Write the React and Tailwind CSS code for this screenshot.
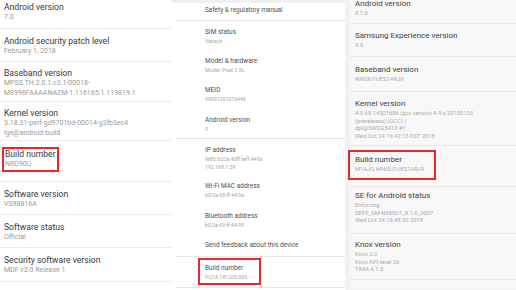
import React from "react";

// left phone (LG) - big text
const left = [
  { t: "Android version", s: ["7.0"], h: 29, pt: 1 },
  { t: "Android security patch level", s: ["February 1, 2018"], h: 33, pt: 6 },
  { t: "Baseband version", s: ["MPSS.TH.2.0.1.c3.1-00018-", "M8996FAAAANAZM-1.116165.1.119819.1"], h: 40, pt: 5 },
  { t: "Kernel version", s: ["3.18.31-perf-gd9701bd-00014-g3fb3ec4", "lge@android-build"], h: 39, pt: 5 },
  { t: "Build number", s: ["NRD90U"], h: 35, box: true },
  { t: "Software version", s: ["VS98816A"], h: 33, pt: 6 },
  { t: "Software status", s: ["Official"], h: 33, pt: 6 },
  { t: "Security software version", s: ["MDF v3.0 Release 1"], h: 34, pt: 6 },
];

// middle phone (Pixel) - grouped
const middle = [
  [{ t: "Safety & regulatory manual", s: [], h: 18, pt: 2.5 }],
  [
    { t: "SIM status", s: ["Verizon"], h: 29, pt: 6.5 },
    { t: "Model & hardware", s: ["Model: Pixel 3 XL"], h: 29, pt: 6.5 },
    { t: "MEID", s: ["99001201016446"], h: 30, pt: 6.5 },
    { t: "Android version", s: ["9"], h: 30, pt: 6.5 },
  ],
  [
    { t: "IP address", s: ["fe80::b22a:43ff:feff:449a", "192.168.1.59"], h: 33, pt: 6.5 },
    { t: "Wi-Fi MAC address", s: ["b0:2a:43:ff:44:9a"], h: 30, pt: 9.5 },
    { t: "Bluetooth address", s: ["b0:2a:43:ff:44:99"], h: 28, pt: 9.5 },
    { t: "Send feedback about this device", s: [], h: 27, pt: 10.5 },
  ],
  [{ t: "Build number", s: ["PQ1A.181205.006"], h: 30, box: true }],
];

// right phone (Samsung)
const right = [
  { t: "Android version", s: ["8.1.0"], h: 25, pt: 0, mt: -1 },
  { t: "Samsung Experience version", s: ["9.5"], h: 33, pt: 7 },
  { t: "Baseband version", s: ["N960U1UES1ARJ9"], h: 35, pt: 8 },
  { t: "Kernel version", s: ["4.9.65-14501686 (gcc version 4.9.x 20150123", "(prerelease) (GCC) )", "dpi@SWDG5413 #1", "Wed Oct 24 16:42:13 KST 2018"], h: 54, pt: 7 },
  { t: "Build number", s: ["M1AJQ.N960U1UES1ARJ9"], h: 37, box: true },
  { t: "SE for Android status", s: ["Enforcing", "SEPF_SM-N960U1_8.1.0_0007", "Wed Oct 24 16:48:30 2018"], h: 47, pt: 4 },
  { t: "Knox version", s: ["Knox 3.2", "Knox API level 26", "TIMA 4.1.0"], h: 46, pt: 6 },
  { t: "Service provider SW ver.", s: [], h: 20, pt: 8, last: true },
];

function LeftItem({ it }) {
  const title = "text-[8.6px] leading-[12px] text-[#383838]";
  const sub = "text-[7px] leading-[9.5px] text-[#9b9b9b]";
  if (it.box) {
    return (
      <div className="border-b border-[#ebebeb]" style={{ height: it.h }}>
        <div className="ml-[2px] mt-[6px] h-[25px] w-[57px] border-2 border-[#e8262b] pl-[1px]">
          <div className="text-[8.6px] leading-[11px] text-[#383838]">Build number</div>
          {it.s.map((l) => (
            <div key={l} className={sub}>{l}</div>
          ))}
        </div>
      </div>
    );
  }
  return (
    <div className="border-b border-[#ebebeb] pl-[4px]" style={{ height: it.h, paddingTop: it.pt }}>
      <div className={title}>{it.t}</div>
      {it.s.map((l) => (
        <div key={l} className={sub}>{l}</div>
      ))}
    </div>
  );
}

function MiddleItem({ it, last }) {
  const title = "text-[6.5px] leading-[9px] text-[#505050]";
  const sub = "text-[5.2px] leading-[8px] text-[#a5a5a5]";
  const border = last ? "border-b border-[#e9e9e9]" : "";
  if (it.box) {
    return (
      <div className={border} style={{ height: it.h }}>
        <div className="ml-[22px] mt-[1px] h-[27px] w-[63px] border-2 border-[#e8262b] pl-[5px] pt-[3.5px]">
          <div className={title}>{it.t}</div>
          {it.s.map((l) => (
            <div key={l} className={sub}>{l}</div>
          ))}
        </div>
      </div>
    );
  }
  return (
    <div className={`${border} pl-[29px]`} style={{ height: it.h, paddingTop: it.pt }}>
      <div className={title}>{it.t}</div>
      {it.s.map((l) => (
        <div key={l} className={sub}>{l}</div>
      ))}
    </div>
  );
}

function RightItem({ it }) {
  const title = "text-[8px] leading-[10px] text-[#3e3e3e]";
  const sub = "text-[5.8px] leading-[7.5px] text-[#ababab]";
  const border = it.last ? "" : "border-b border-[#e8e8e8]";
  if (it.box) {
    return (
      <div className={border} style={{ height: it.h }}>
        <div className="-ml-[2px] mt-[4px] h-[30px] w-[88px] border-2 border-[#e8262b] pl-[5px] pt-[3px]">
          <div className={title}>{it.t}</div>
          <div className="mt-[1px]">
            {it.s.map((l) => (
              <div key={l} className={sub}>{l}</div>
            ))}
          </div>
        </div>
      </div>
    );
  }
  return (
    <div className={`${border} pl-[5px]`} style={{ height: it.h, paddingTop: it.pt }}>
      <div className={title} style={{ marginTop: it.mt || 0 }}>{it.t}</div>
      <div className="mt-[1px]">
        {it.s.map((l) => (
          <div key={l} className={sub}>{l}</div>
        ))}
      </div>
    </div>
  );
}

export default function App() {
  return (
    <div className="flex h-[290px] w-[516px] overflow-hidden bg-white font-['Roboto',sans-serif]">
      {/* LG */}
      <div className="w-[172px] shrink-0 bg-white">
        {left.map((it) => (
          <LeftItem key={it.t} it={it} />
        ))}
      </div>

      {/* Pixel */}
      <div className="w-[173px] shrink-0 bg-white">
        <div className="h-[3px] bg-[#f0f0f0]" />
        <div className="ml-[4px]">
          {middle.map((group, gi) => (
            <div key={gi}>
              {group.map((it, i) => (
                <MiddleItem key={it.t} it={it} last={i === group.length - 1} />
              ))}
            </div>
          ))}
        </div>
      </div>

      {/* Samsung */}
      <div className="flex-1 bg-[#f1f1f1] pl-[5px]">
        <div className="h-full bg-[#f8f8f8]">
          {right.map((it) => (
            <RightItem key={it.t} it={it} />
          ))}
        </div>
      </div>
    </div>
  );
}
